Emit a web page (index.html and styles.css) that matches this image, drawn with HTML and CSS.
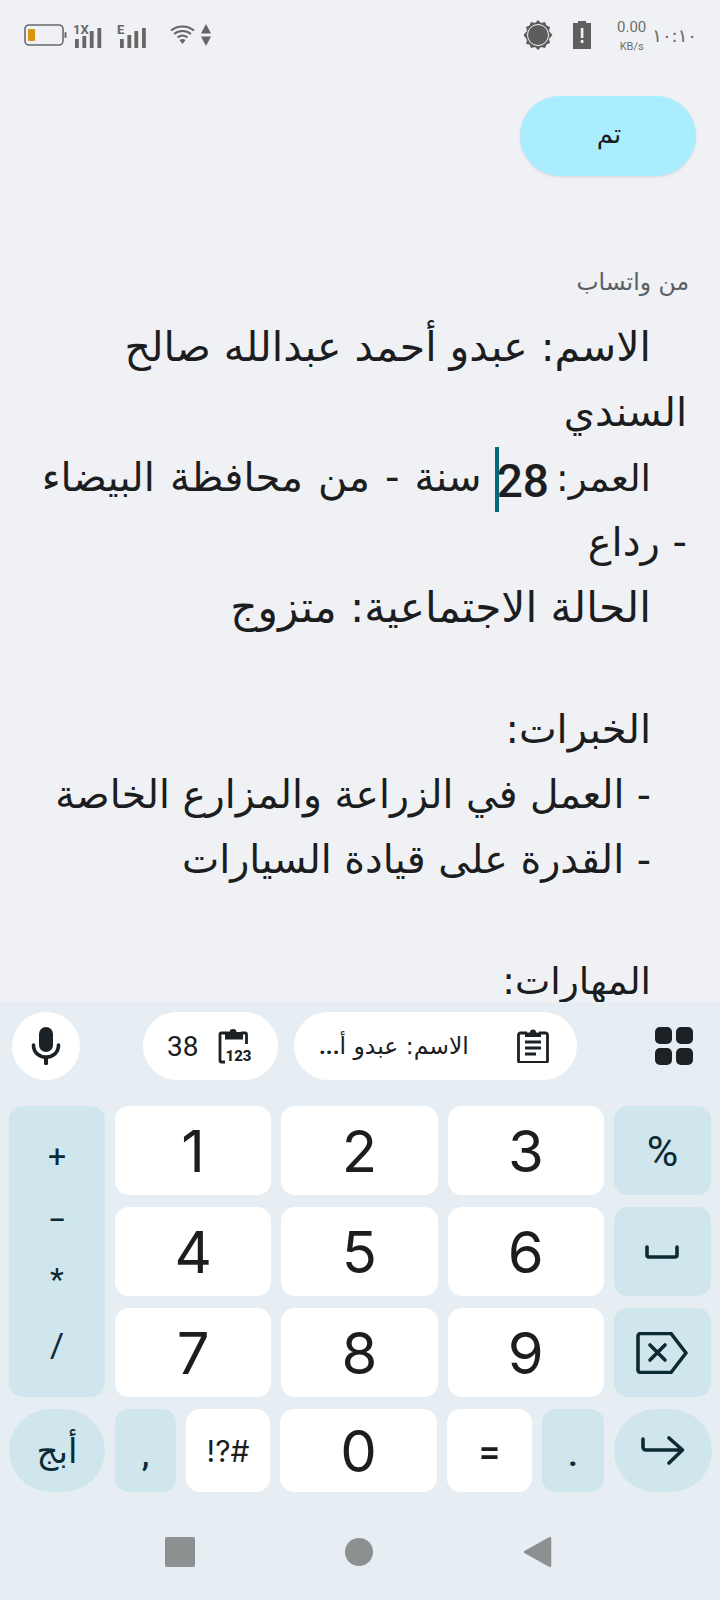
FILE: index.html
```html
<!DOCTYPE html>
<html lang="ar">
<head>
<meta charset="utf-8">
<title>Note</title>
<link rel="stylesheet" href="styles.css">
</head>
<body>
<div class="page">
  <header class="status">
    <div class="status-left">
      <svg class="ic-battery" width="43" height="22" viewBox="0 0 43 22"><rect x="1" y="1" width="38" height="20" rx="4" fill="none" stroke="#6a6a6a" stroke-width="1.6"/><rect x="4" y="5" width="7" height="12" rx="1" fill="#d9930d"/><rect x="40.500" y="8" width="2" height="6" rx="1" fill="#6a6a6a"/></svg>
      <svg class="ic-sig" width="29" height="26" viewBox="0 0 29 26"><text x="0" y="11" class="sig-label">1X</text><rect x="2" y="16" width="3.800" height="9" fill="#666"/><rect x="9.400" y="13" width="3.800" height="12" fill="#666"/><rect x="16.800" y="8" width="3.800" height="17" fill="#666"/><rect x="24.400" y="5" width="3.800" height="20" fill="#666"/></svg>
      <svg class="ic-sig ic-sig-e" width="29" height="26" viewBox="0 0 29 26"><text x="0" y="11" class="sig-label">E</text><rect x="3" y="16" width="3.800" height="9" fill="#666"/><rect x="10.400" y="12" width="3.800" height="13" fill="#666"/><rect x="17.400" y="8" width="3.800" height="17" fill="#666"/><rect x="25" y="5" width="3.800" height="20" fill="#666"/></svg>
      <svg class="ic-wifi" width="25" height="20" viewBox="0 0 25 20"><g fill="none" stroke="#666" stroke-width="2"><path d="M1 5.500C7.500 0 17.500 0 24 5.500"/><path d="M4 9C9 5 16 5 21 9"/><path d="M7.500 12.500C10.500 10 14.500 10 17.500 12.500"/></g><path d="M9.500 15C11.500 13.700 13.500 13.700 15.500 15L12.500 19Z" fill="#666"/></svg>
      <svg class="ic-arrows" width="10" height="22" viewBox="0 0 10 22"><path d="M5 0L10 9.500H0ZM0 12.500H10L5 22Z" fill="#666"/></svg>
    </div>
    <div class="status-right">
      <svg class="ic-bright" width="30" height="30" viewBox="0 0 30 30"><path d="M15 0l3 3 4-1 1.500 3.500 3.500 1.500-1 4 3.500 4-3.500 4 1 4-3.500 1.500L22 28l-4-1-3 3-3-3-4 1-1.500-3.500L3 24l1-4L.5 15 4 11 3 7l3.500-1.500L8 2l4 1z" fill="#5c5c5c"/><circle cx="15" cy="15" r="10.500" fill="none" stroke="#f4f5f6" stroke-width="1"/></svg>
      <svg class="ic-batt2" width="18" height="28" viewBox="0 0 18 28"><path d="M5 0h8v2h5v26H0V2h5z" fill="#5f5f5f"/><rect x="7.800" y="7" width="2.600" height="10" fill="#f1f2f4"/><rect x="7.800" y="19" width="2.600" height="3" fill="#f1f2f4"/></svg>
      <div class="speed"><span class="speed-val">0.00</span><span class="speed-unit">KB/s</span></div>
      <span class="clock">١٠:١٠</span>
    </div>
  </header>

  <main class="content" dir="rtl">
    <div class="done-row"><button class="done">تم</button></div>
    <p class="source">من واتساب</p>
    <div class="note">
      <div class="line ind fit-name">الاسم: عبدو أحمد عبدالله صالح</div>
      <div class="line">السندي</div>
      <div class="line ind fit-age"><span class="age-label">العمر:</span> <span class="num">28</span><span class="caret"></span> سنة - من محافظة البيضاء</div>
      <div class="line">- رداع</div>
      <div class="line ind fit-status">الحالة الاجتماعية: متزوج</div>
      <div class="blank"></div>
      <div class="line ind">الخبرات:</div>
      <div class="line ind fit-farm">- العمل في الزراعة والمزارع الخاصة</div>
      <div class="line ind fit-drive">- القدرة على قيادة السيارات</div>
      <div class="blank"></div>
      <div class="line ind fit-skills">المهارات:</div>
    </div>
  </main>

  <section class="kbd">
    <div class="tools">
      <div class="pill mic">
        <svg width="30" height="38" viewBox="0 0 30 38"><rect x="8" y="0" width="14" height="25" rx="7" fill="#1b2124"/><path d="M2.500 18c0 7.500 5.500 12 12.500 12s12.500-4.500 12.500-12" fill="none" stroke="#1b2124" stroke-width="3.600" stroke-linecap="round"/><rect x="13" y="29" width="4" height="9" rx="1.500" fill="#1b2124"/></svg>
      </div>
      <div class="pill count">
        <span class="count-num">38</span>
        <svg width="34" height="35" viewBox="0 0 34 35"><path d="M11 4H3.500A1.500 1.500 0 0 0 2 5.500v26A1.500 1.500 0 0 0 3.500 33H7M23 4h4A1.500 1.500 0 0 1 28.500 5.500V15" fill="none" stroke="#1b2124" stroke-width="2.800"/><path d="M7 3h4.500a3.500 3 0 0 1 7 0H25v7.500H7z" fill="#1b2124"/><text x="7.500" y="32" class="clip-num">123</text></svg>
      </div>
      <div class="pill clip">
        <svg width="32" height="34" viewBox="0 0 32 34"><path d="M10 4H3.500A2 2 0 0 0 1.500 6v25.500a2 2 0 0 0 2 2h25a2 2 0 0 0 2-2V6a2 2 0 0 0-2-2H22" fill="none" stroke="#1b2124" stroke-width="2.800"/><path d="M8 8V3.500h5a3 3 0 0 1 6 0h5V8z" fill="#1b2124"/><path d="M8 13h16M8 19h16M8 25h11" stroke="#1b2124" stroke-width="2.800"/></svg>
        <span class="clip-text"><span class="clip-ar">الاسم: عبدو أ</span><span class="clip-dots">...</span></span>
      </div>
      <svg class="apps" width="38" height="38" viewBox="0 0 38 38"><g fill="#1b2124"><rect x="0" y="0" width="17" height="17" rx="5"/><rect x="21" y="0" width="17" height="17" rx="5"/><rect x="0" y="21" width="17" height="17" rx="5"/><rect x="21" y="21" width="17" height="17" rx="5"/></g></svg>
    </div>

    <div class="keys">
      <div class="key fn ops"><span class="op op1">+</span><span class="op op2">−</span><span class="op op3">*</span><span class="op op4">/</span></div>
      <div class="key digit">1</div>
      <div class="key digit">2</div>
      <div class="key digit">3</div>
      <div class="key fn pct">%</div>
      <div class="key digit">4</div>
      <div class="key digit">5</div>
      <div class="key digit">6</div>
      <div class="key fn"><svg width="34" height="14" viewBox="0 0 34 14"><path d="M2 2v8a2 2 0 0 0 2 2h26a2 2 0 0 0 2-2V2" fill="none" stroke="#0c2a33" stroke-width="3.600" stroke-linecap="round"/></svg></div>
      <div class="key digit">7</div>
      <div class="key digit">8</div>
      <div class="key digit">9</div>
      <div class="key fn"><svg width="52" height="42" viewBox="0 0 52 42"><path d="M2 4a2.500 2.500 0 0 1 2.500-2.500H35L50 21 35 40.500H4.500A2.500 2.500 0 0 1 2 38Z" fill="none" stroke="#0c2a33" stroke-width="3.600" stroke-linejoin="round"/><path d="M14 13l15 15M29 13L14 28" stroke="#0c2a33" stroke-width="3.600" stroke-linecap="round"/></svg></div>
    </div>
    <div class="bottom">
      <div class="key fn round abc w96">أبج</div>
      <div class="key fn w61 mark comma">,</div>
      <div class="key digit w84 sym">!?#</div>
      <div class="key digit w157">0</div>
      <div class="key digit w85 eq">=</div>
      <div class="key fn w62 mark dot">.</div>
      <div class="key fn round w98"><svg width="44" height="30" viewBox="0 0 44 30"><path d="M2 3v8a3 3 0 0 0 3 3h36M28 2l13.500 12L28 27" fill="none" stroke="#0c2a33" stroke-width="3.600" stroke-linecap="round" stroke-linejoin="round"/></svg></div>
    </div>
    <nav class="nav">
      <span class="nav-sq"></span>
      <span class="nav-dot"></span>
      <svg width="29" height="32" viewBox="0 0 29 32"><path d="M27 2L2 16l25 14z" fill="#8c9091" stroke="#8c9091" stroke-width="2.500" stroke-linejoin="round"/></svg>
    </nav>
  </section>
</div>
</body>
</html>
```
FILE: styles.css
```css
* { box-sizing: border-box; }
html, body { margin: 0; padding: 0; }
body { font-family: "DejaVu Sans", sans-serif; color: #1b1d1f; }
.page { width: 720px; height: 1600px; display: flex; flex-direction: column; overflow: hidden; background: #eff1f4; }

.status { height: 70px; flex: none; display: flex; justify-content: space-between; align-items: center; padding: 0 23px 0 24px; }
.status-left, .status-right { display: flex; align-items: center; }
.ic-sig { margin-left: 6px; margin-top: 2px; }
.ic-sig-e { margin-left: 15px; }
.ic-wifi { margin-left: 24px; }
.ic-arrows { margin-left: 6px; }
.sig-label { font: 700 13px "Roboto", sans-serif; fill: #666; }
.ic-batt2 { margin-left: 20px; }
.speed { display: flex; flex-direction: column; align-items: center; margin-left: 26px; font-family: "Roboto", sans-serif; color: #6d6d6d; }
.speed-val { font-size: 15px; line-height: 20px; }
.speed-unit { font-size: 11px; line-height: 14px; margin-top: 3px; }
.clock { margin-left: 6px; font-size: 18px; color: #666; }

.content { flex: 1; min-height: 0; overflow: hidden; padding: 0 33px 0 24px; }
.done-row { display: flex; justify-content: flex-start; margin-right: -9px; padding-top: 26px; }
.done { width: 176px; height: 80px; border: 0; border-radius: 40px; background: #a9edff; box-shadow: 0 1px 3px rgba(0,0,0,.1); font: 26px "DejaVu Sans", sans-serif; color: #1b1d1f; padding: 0 0 5px 2px; }
.source { margin: 88px -2px 0 0; font-size: 23.5px; line-height: 36px; color: #5a6065; }
.note { margin-top: 15px; }
.line { font-size: 40px; line-height: 65px; height: 65px; white-space: nowrap; }
.blank { height: 57px; }
.ind { padding-right: 36px; }
.fit-name { font-size: 41px; }
.fit-age { word-spacing: 2.4px; }
.age-label { font-size: 37.5px; }
.fit-status { font-size: 42.3px; }
.fit-farm { font-size: 39.3px; }
.fit-drive { font-size: 39.6px; }
.fit-skills { font-size: 37.5px; }
.num { font-family: "Roboto", sans-serif; font-size: 46px; font-weight: 500; line-height: 1; margin-right: -8px; vertical-align: -6px; }
.caret { display: inline-block; width: 0; height: 0; position: relative; }
.caret::after { content: ""; position: absolute; left: -2px; top: -44px; width: 4px; height: 65px; background: #006a7c; }

.kbd { flex: none; height: 598px; background: #e6eef4; display: flex; flex-direction: column; }
.tools { display: flex; align-items: center; padding: 10px 27px 0 12px; }
.pill { height: 68px; border-radius: 34px; background: #fff; display: flex; align-items: center; }
.mic { width: 68px; justify-content: center; }
.count { width: 135px; margin-left: 63px; padding: 0 26px 0 24px; justify-content: space-between; }
.count-num { font: 400 28px "Roboto", sans-serif; }
.clip-num { font: 800 15px "Roboto", sans-serif; fill: #1b2124; }
.clip { width: 283px; margin-left: 16px; padding: 0 28px 0 25px; flex-direction: row-reverse; justify-content: space-between; }
.clip-text { display: flex; flex-direction: row-reverse; font-size: 23.5px; }
.clip-dots { font-family: "Roboto", sans-serif; font-weight: 700; }
.apps { margin-left: auto; }

.keys { display: grid; grid-template-columns: 96px 1fr 1fr 1fr 97px; grid-auto-rows: 89px; gap: 12px 10px; padding: 26px 9px 0; }
.key { display: flex; align-items: center; justify-content: center; border-radius: 14px; }
.digit { background: #fff; font: 400 58px "Inter", sans-serif; color: #1b1d1f; }
.fn { background: #cfe6ed; color: #0c2a33; }
.ops { grid-row: span 3; flex-direction: column; justify-content: flex-start; align-items: center; }
.op { font: 400 32px "Roboto", sans-serif; line-height: 40px; height: 40px; }
.op1 { margin-top: 30px; }
.op2 { margin-top: 24px; }
.op3 { margin-top: 19px; }
.op4 { margin-top: 26px; font-size: 34px; }
.pct { font: 400 43px "Roboto", sans-serif; }
.bottom { display: flex; gap: 10px; height: 83px; margin: 12px 9px 0; }
.round { border-radius: 42px; }
.w96 { flex: 0 0 96px; }
.w61 { flex: 0 0 61px; }
.w84 { flex: 0 0 84px; }
.w157 { flex: 0 0 157px; }
.w85 { flex: 0 0 85px; }
.w62 { flex: 0 0 62px; }
.w98 { flex: 0 0 98px; }
.abc { font-size: 34px; }
.mark { font: 400 30px "Roboto", sans-serif; padding-top: 6px; }
.comma { font-weight: 500; font-size: 34px; }
.dot { font-weight: 700; font-size: 32px; padding-top: 8px; }
.sym { font: 400 30px "Inter", sans-serif; direction: ltr; }
.eq { font: 600 34px "Inter", sans-serif; }

.nav { flex: 1; display: flex; align-items: center; justify-content: center; gap: 150px; padding: 12px 3px 0 0; }
.nav-sq { width: 30px; height: 30px; border-radius: 2px; background: #8c9091; }
.nav-dot { width: 28px; height: 28px; border-radius: 50%; background: #8c9091; }
```
